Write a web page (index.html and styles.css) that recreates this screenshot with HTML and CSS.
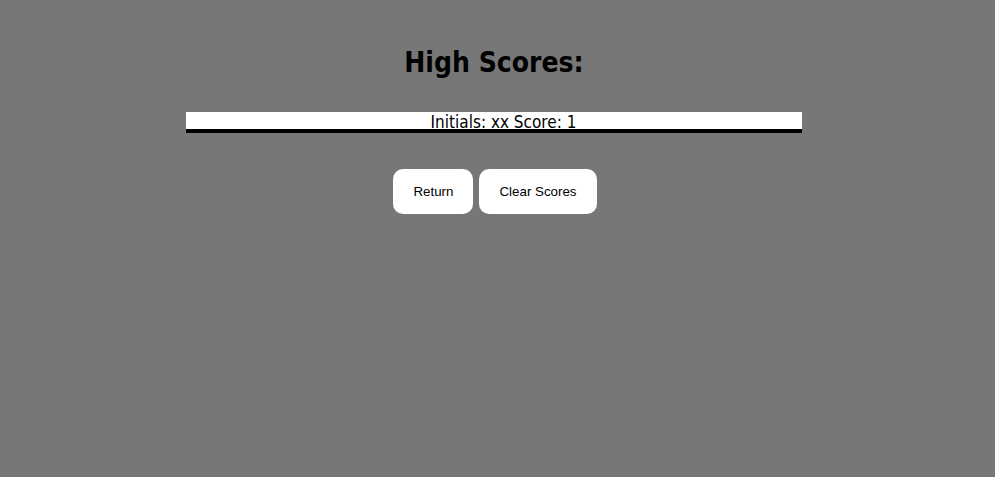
FILE: index.html
```html
<!DOCTYPE html>
<html lang="en">
<head>
<meta charset="utf-8">
<title>High Scores</title>
<link rel="stylesheet" href="styles.css">
</head>
<body>
<main class="page">
  <h1 class="title">High Scores:</h1>
  <ol class="scores">
    <li class="score-row">Initials: xx Score: 1</li>
  </ol>
  <div class="actions">
    <button class="btn" type="button">Return</button>
    <button class="btn" type="button">Clear Scores</button>
  </div>
</main>
</body>
</html>
```
FILE: styles.css
```css
html, body {
  margin: 0;
  padding: 0;
  background: #777777;
}

.page {
  box-sizing: border-box;
  width: 995px;
  min-height: 477px;
  padding: 0 7px 0 0;
  display: flex;
  flex-direction: column;
  align-items: center;
  font-family: "DejaVu Sans Condensed", "DejaVu Sans", sans-serif;
  color: #000;
}

.title {
  margin: 46px 0 0;
  font-size: 28px;
  line-height: 34px;
  font-weight: bold;
}

.scores {
  list-style: none;
  margin: 32px 0 0;
  padding: 0;
  width: 616px;
}

.score-row {
  background: #ffffff;
  border-bottom: 4px solid #000;
  height: 15px;
  padding: 2px 0 0 19px;
  line-height: 17px;
  font-size: 17px;
  text-align: center;
}

.actions {
  display: flex;
  gap: 6px;
  margin-top: 36px;
  padding-left: 2px;
}

.btn {
  font-family: "Liberation Sans", Arial, sans-serif;
  font-size: 13.33px;
  line-height: 15px;
  padding: 15px 20px;
  border: none;
  border-radius: 10px;
  background: #ffffff;
  color: #000;
}
```
